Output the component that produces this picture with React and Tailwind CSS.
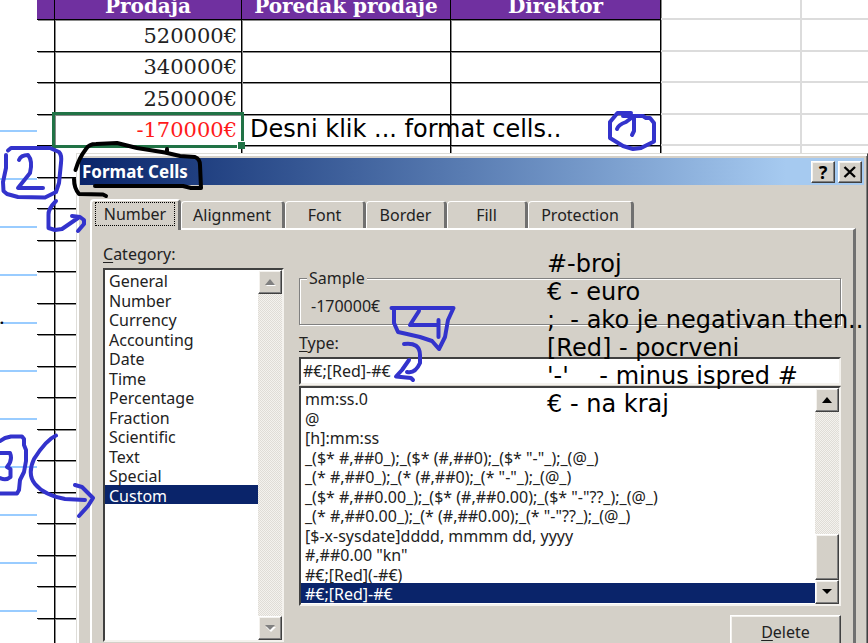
import React from "react";

const categories = [
  "General", "Number", "Currency", "Accounting", "Date", "Time",
  "Percentage", "Fraction", "Scientific", "Text", "Special", "Custom",
];

const formats = [
  "mm:ss.0",
  "@",
  "[h]:mm:ss",
  '_($* #,##0_);_($* (#,##0);_($* "-"_);_(@_)',
  '_(* #,##0_);_(* (#,##0);_(* "-"_);_(@_)',
  '_($* #,##0.00_);_($* (#,##0.00);_($* "-"??_);_(@_)',
  '_(* #,##0.00_);_(* (#,##0.00);_(* "-"??_);_(@_)',
  "[$-x-sysdate]dddd, mmmm dd, yyyy",
  '#,##0.00 "kn"',
  "#€;[Red](-#€)",
  "#€;[Red]-#€",
];

const sales = ["520000€", "340000€", "250000€", "-170000€", ...Array(16).fill("")];

const tabs = [
  { name: "Alignment", width: "w-[104px]" },
  { name: "Font", width: "w-[81px]" },
  { name: "Border", width: "w-[81px]" },
  { name: "Fill", width: "w-[81px]" },
  { name: "Protection", width: "w-[106px]" },
];

const raised =
  "bg-[#d4d0c8] border border-t-white border-l-white border-r-[#404040] border-b-[#404040] shadow-[inset_-1px_-1px_0_#808080,inset_1px_1px_0_#f4f2ee]";
const sunken =
  "bg-white border-2 border-t-[#404040] border-l-[#404040] border-r-[#f4f2ee] border-b-[#f4f2ee]";

function RuledPaper() {
  return (
    <div className="w-[37px] shrink-0 pt-[84px] text-sm">
      {Array.from({ length: 12 }, (_, i) => (
        <div key={i} className="flex h-12 items-end border-b-2 border-[#99ccff]">
          {i === 4 && <span className="-mb-1 leading-none font-bold">.</span>}
        </div>
      ))}
    </div>
  );
}

function Sheet() {
  const line = "border-r border-b border-black shadow-[1px_1px_0_#8a8a8a]";
  const faint = "border-r-2 border-b-2 border-[#dcdcdc]";
  return (
    <table className="-mt-3 w-[973px] shrink-0 table-fixed border-separate border-spacing-0 font-['DejaVu_Serif',serif]">
      <colgroup>
        <col className="w-[18px]" />
        <col className="w-[187px]" />
        <col className="w-[209px]" />
        <col className="w-[210px]" />
        <col className="w-[141px]" />
        <col />
      </colgroup>
      <thead>
        <tr className="h-8 text-[20px] leading-6 text-white">
          <th className={`${line} bg-[#7030a0] p-0`} />
          <th className={`${line} bg-[#7030a0] p-0 pt-1`}>Prodaja</th>
          <th className={`${line} bg-[#7030a0] p-0 pt-1 whitespace-nowrap`}>Poredak prodaje</th>
          <th className={`${line} bg-[#7030a0] p-0 pt-1`}>Direktor</th>
          <th className={faint} />
          <th className={faint} />
        </tr>
      </thead>
      <tbody>
        {sales.map((amount, i) => (
          <tr key={i} className="h-8 even:h-[31px]">
            <td className={`${line} p-0`} />
            <td
              className={`${line} relative p-0 pr-1 text-right text-[21px] leading-6 ${
                amount.startsWith("-") ? "text-[#ff1a1a]" : "text-[#222]"
              }`}
            >
              {amount}
              {i === 3 && (
                <span className="absolute -inset-[3px] z-10 border-[3px] border-[#217346]">
                  <span className="absolute -right-1 -bottom-1 size-2 border-t border-l border-white bg-[#217346]" />
                </span>
              )}
            </td>
            <td className={`${line} p-0`} />
            <td className={`${line} p-0`} />
            <td className={`${faint} p-0`} />
            <td className={`${faint} p-0`} />
          </tr>
        ))}
      </tbody>
    </table>
  );
}

function Triangle({ down, muted }) {
  return (
    <svg width="12" height="8" viewBox="0 0 12 8" aria-hidden="true">
      {muted && <path d={down ? "M2 3h10L7 8z" : "M2 8h10L7 3z"} fill="#fff" />}
      <path d={down ? "M1 1h10L6 6z" : "M1 7h10L6 1z"} fill={muted ? "#808080" : "#000"} />
    </svg>
  );
}

function ScrollBar({ muted }) {
  const button = `${raised} flex h-6 w-full shrink-0 items-center justify-center`;
  return (
    <div className="flex w-6 shrink-0 flex-col bg-[repeating-conic-gradient(#f4f2ee_0_25%,#dfdcd6_0_50%)] bg-[length:2px_2px]">
      <button type="button" aria-label="Scroll up" className={button}>
        <Triangle muted={muted} />
      </button>
      <div className="flex-1" />
      {!muted && <div className={`${raised} h-[46px] w-full`} />}
      <button type="button" aria-label="Scroll down" className={button}>
        <Triangle down muted={muted} />
      </button>
    </div>
  );
}

function ListBox({ id, label, items, selected, muted, className }) {
  return (
    <div className={`${sunken} flex ${className}`}>
      <select
        id={id}
        aria-label={label}
        size={items.length}
        defaultValue={selected}
        className="h-full min-w-0 flex-1 appearance-none overflow-hidden border-0 bg-white p-0 outline-none"
      >
        {items.map((item) => (
          <option
            key={item}
            value={item}
            className="h-5 min-h-0 overflow-visible p-0 pl-1 leading-[18px] whitespace-pre text-[#222] even:h-[19px] checked:bg-[#0a246a] checked:bg-[linear-gradient(#0a246a,#0a246a)] checked:text-white"
          >
            {item}
          </option>
        ))}
      </select>
      <ScrollBar muted={muted} />
    </div>
  );
}

function FormatCells() {
  return (
    <section
      aria-label="Format Cells"
      className="absolute top-[153px] right-0 left-[76px] z-20 border border-t-[#deddd8] border-r-[#404040] border-b-[#404040] border-l-[#deddd8] bg-[#d4d0c8] px-[3px] py-1 font-['Noto_Sans',sans-serif] text-base leading-5 text-[#222] shadow-[inset_2px_2px_0_#fff,inset_-1px_0_0_#808080]"
    >
      <header className="flex h-[27px] items-center gap-[3px] bg-linear-to-r from-[#0a246a] to-[#a6caf0] to-90% pr-0.5 pl-0.5">
        <h1 className="flex-1 text-[17px] font-bold text-white">Format Cells</h1>
        <button type="button" aria-label="Help" className={`${raised} flex h-[22px] w-6 items-center justify-center text-lg leading-none font-bold text-black`}>
          ?
        </button>
        <button type="button" aria-label="Close" className={`${raised} flex h-[22px] w-6 items-center justify-center`}>
          <svg width="14" height="12" viewBox="0 0 14 12" stroke="#000" strokeWidth="2.4" aria-hidden="true">
            <path d="M1.5 1l10.500 10M12 1L1.500 11" />
          </svg>
        </button>
      </header>

      <nav className="mt-[14px] flex h-[29px] items-end pl-[10px]">
        <button
          type="button"
          className="relative -mb-[2px] h-[31px] w-[91px] rounded-t border-t-2 border-r-[3px] border-l-2 border-t-white border-r-[#707070] border-l-white bg-[#d4d0c8] px-[3px] pb-1"
        >
          <span className="flex h-6 items-center justify-center border border-dotted border-black">Number</span>
        </button>
        {tabs.map((tab) => (
          <button
            key={tab.name}
            type="button"
            className={`${tab.width} h-[27px] rounded-t border-t border-r-[3px] border-l border-t-white border-r-[#707070] border-l-white`}
          >
            {tab.name}
          </button>
        ))}
      </nav>

      <div className="mr-2 ml-[10px] flex gap-[15px] border-t-2 border-r-[3px] border-l-2 border-t-white border-r-[#707070] border-l-white pt-[14px] pr-3 pb-12 pl-[11px]">
        <div className="w-[181px] shrink-0">
          <label htmlFor="category" className="block">
            <u className="underline-offset-2">C</u>ategory:
          </label>
          <ListBox id="category" label="Category" items={categories} selected="Custom" muted className="mt-1 h-[374px]" />
        </div>

        <form className="min-w-0 flex-1 pt-6" onSubmit={(e) => e.preventDefault()}>
          <fieldset className="h-[57px] border border-[#808080] px-[7px] shadow-[inset_1px_1px_0_#fff,1px_1px_0_#fff]">
            <legend className="bg-[#d4d0c8] px-0.5">Sample</legend>
            <output className="block px-1 pt-2">-170000€</output>
          </fieldset>
          <label htmlFor="type" className="mt-2 block">
            <u className="underline-offset-2">T</u>ype:
          </label>
          <input id="type" defaultValue="#€;[Red]-#€" className={`${sunken} mt-1 block h-7 w-full px-0.5 outline-none`} />
          <ListBox id="formats" label="Number formats" items={formats} selected="#€;[Red]-#€" className="mt-px h-[220px]" />
          <button type="button" className={`${raised} mt-[9px] ml-auto block h-[34px] w-[111px]`}>
            <u className="underline-offset-2">D</u>elete
          </button>
        </form>
      </div>
    </section>
  );
}

function Notes() {
  return (
    <div className="pointer-events-none font-['DejaVu_Sans',sans-serif] text-2xl leading-7 whitespace-pre text-black">
      <p className="absolute top-[115px] left-[250px] z-30">Desni klik ... format cells..</p>
      <div className="absolute top-[250px] left-[547px] z-30">
        <p>#-broj</p>
        <p>€ - euro</p>
        <p>;&nbsp; - ako je negativan then..</p>
        <p>[Red] - pocrveni</p>
        <p>{"'-'    - minus ispred #"}</p>
        <p>€ - na kraj</p>
      </div>
    </div>
  );
}

function PenMarks() {
  return (
    <svg
      className="pointer-events-none absolute top-0 left-0 z-30"
      width="868"
      height="643"
      viewBox="0 0 868 643"
      fill="none"
      strokeWidth="4"
      strokeLinecap="round"
      strokeLinejoin="round"
      aria-hidden="true"
    >
      <g stroke="#000">
        <path d="M75.500 170Q79 158 86 149Q89 144 96 144L117 143L137 148L165 152.500L180 156L195 157Q200 159 200 165L201 188H191L183 186H95" />
        <path d="M74 179Q74 188 79 194L103 194.500L106 196M167 151V149" />
      </g>
      <g stroke="#3333cc">
        <path d="M631 113H617.500L610 122V138L623 146L633 149L641 148L654 141.500V123L650 118H646L643 116L623 116" />
        <path d="M617 129Q618 125 626 122L634 116V131L632 135" />
        <path d="M8 150.500L11 148H50L59 152Q62 155 61 163L59 183L56 192L45 197.500L18 197L7 194L3.500 191L3 182L6 168V155" />
        <path d="M19 160Q21 155 28 155Q33 161 30 173L18 188H43" />
        <path d="M56 201Q48 209 48.500 215V228L55 230L62 229L78 218M72 216L80 217L84 220V224L78 231" />
        <path d="M0 441L5 438L11 436.500H22L24 439V445L26 450V461L24 472L20 480L19 490L17 493.500H0" />
        <path d="M0 453H10Q13 460 7 467L10.500 469V477Q6 481 0 478" />
        <path d="M56 435.500Q46 440 34 459Q27 474 35 484Q44 495 65 499L85 500M75 485L82 487L93 498L88 506L79 516" />
        <path d="M391.500 308H453.500L448 320L445 337L439 349L432 341L420 337L407 334L398 332L394 323V308" />
        <path d="M419 311L410 325H436M438.500 320V337" />
        <path d="M404 344Q420 342 420 355V363Q415 374 407 372M409 360L402 370L396 376.500L411 378L413 380" />
      </g>
    </svg>
  );
}

export default function App() {
  return (
    <main className="relative flex h-screen overflow-hidden bg-white">
      <RuledPaper />
      <Sheet />
      <FormatCells />
      <Notes />
      <PenMarks />
    </main>
  );
}
